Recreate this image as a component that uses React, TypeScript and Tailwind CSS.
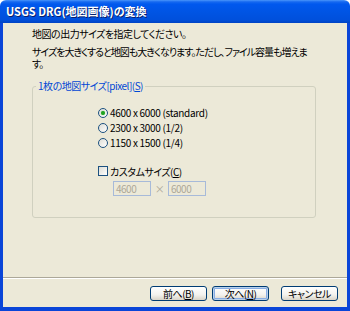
import React from "react";

function Radio({ checked }: { checked?: boolean }) {
    return <span className="relative flex h-[10px] w-[10px] shrink-0 items-center justify-center rounded-full border border-[#1C5180] bg-[linear-gradient(135deg,#DCDCD5,#FFFFFF)]">
        {checked && <span className="h-[4px] w-[4px] rounded-full bg-[#21A121] shadow-[0_0_1px_#5BD05B]" />}
    </span>
}

function Button({ children, def }: { children: React.ReactNode; def?: boolean }) {
    return <div className={`flex h-[15px] w-[57px] items-center justify-center rounded-[3px] border border-[#003C74] bg-[linear-gradient(to_bottom,#FFFFFF,#F3F2EE_60%,#D9D4C8)] text-[10px] leading-none text-black ${def ? "shadow-[inset_0_0_0_1px_#B9D1EA,inset_0_0_0_2px_#89ADE4]" : ""}`}>
        {children}
    </div>
}

export default function App() {
    return <div className="flex h-[311px] w-[350px] flex-col bg-white font-['Noto_Sans_CJK_JP',sans-serif] text-[10px] leading-[11px] tracking-[-0.5px] text-black [font-feature-settings:'palt']">
        {/* title bar */}
        <div className="flex h-[23px] shrink-0 items-center rounded-t-[6px] bg-[linear-gradient(to_bottom,#4A96FA_0%,#1669F0_8%,#0058EE_18%,#0054E3_55%,#0050DC_85%,#0043C4_100%)] pl-[6px]">
            <span className="text-[11px] font-bold tracking-normal text-white [text-shadow:1px_1px_0_#0A1E6A]">USGS DRG(地図画像)の変換</span>
        </div>

        {/* body */}
        <div className="flex flex-1 flex-col border-x-[3px] border-b-[4px] border-[#0A45D8] bg-[#ECE9D8]">
            <div className="pl-[29px] pr-[31px] pt-[5px]">
                <p className="whitespace-nowrap">地図の出力サイズを指定してください。</p>
                <p className="mt-[7px] whitespace-nowrap leading-[12px] tracking-[-1px]">サイズを大きくすると地図も大きくなります。ただし、ファイル容量も増えま<br />す。</p>

                <div className="relative mt-[16px] rounded-[3px] border border-[#D0D0BF] pb-[21px] pl-[65px]">
                    <span className="absolute left-[3px] top-[-7px] bg-[#ECE9D8] px-[2px] text-[#0046D5]">1枚の地図サイズ[pixel](<u>S</u>)</span>
                    <div className="flex flex-col pt-[18px] tracking-[-0.3px]">
                        <div className="flex h-[15px] items-center gap-[2px]"><Radio checked /><span>4600 x 6000 (standard)</span></div>
                        <div className="flex h-[15px] items-center gap-[2px]"><Radio /><span>2300 x 3000 (1/2)</span></div>
                        <div className="flex h-[15px] items-center gap-[2px]"><Radio /><span>1150 x 1500 (1/4)</span></div>
                    </div>
                    <div className="mt-[14px] flex h-[14px] items-center gap-[2px]">
                        <span className="h-[10px] w-[10px] shrink-0 border border-[#1C5180] bg-[linear-gradient(135deg,#DCDCD5,#FFFFFF)]" />
                        <span>カスタムサイズ(<u>C</u>)</span>
                    </div>
                    <div className="ml-[15px] mt-[3px] flex items-center text-[#ACA899]">
                        <div className="flex h-[15px] w-[38px] items-center border border-[#A7BAD9] pl-[2px]">4600</div>
                        <span className="w-[17px] text-center">×</span>
                        <div className="flex h-[15px] w-[38px] items-center border border-[#A7BAD9] pl-[2px]">6000</div>
                    </div>
                </div>
            </div>

            <div className="flex-1" />

            <div className="mb-[7px] h-[2px] border-t border-b border-t-[#ACA899] border-b-white" />

            <div className="flex justify-end pb-[6px] pr-[9px]">
                <Button>前へ(<u>B</u>)</Button>
                <div className="w-[5px]" />
                <Button def>次へ(<u>N</u>)</Button>
                <div className="w-[12px]" />
                <Button>キャンセル</Button>
            </div>
        </div>
    </div>
}
